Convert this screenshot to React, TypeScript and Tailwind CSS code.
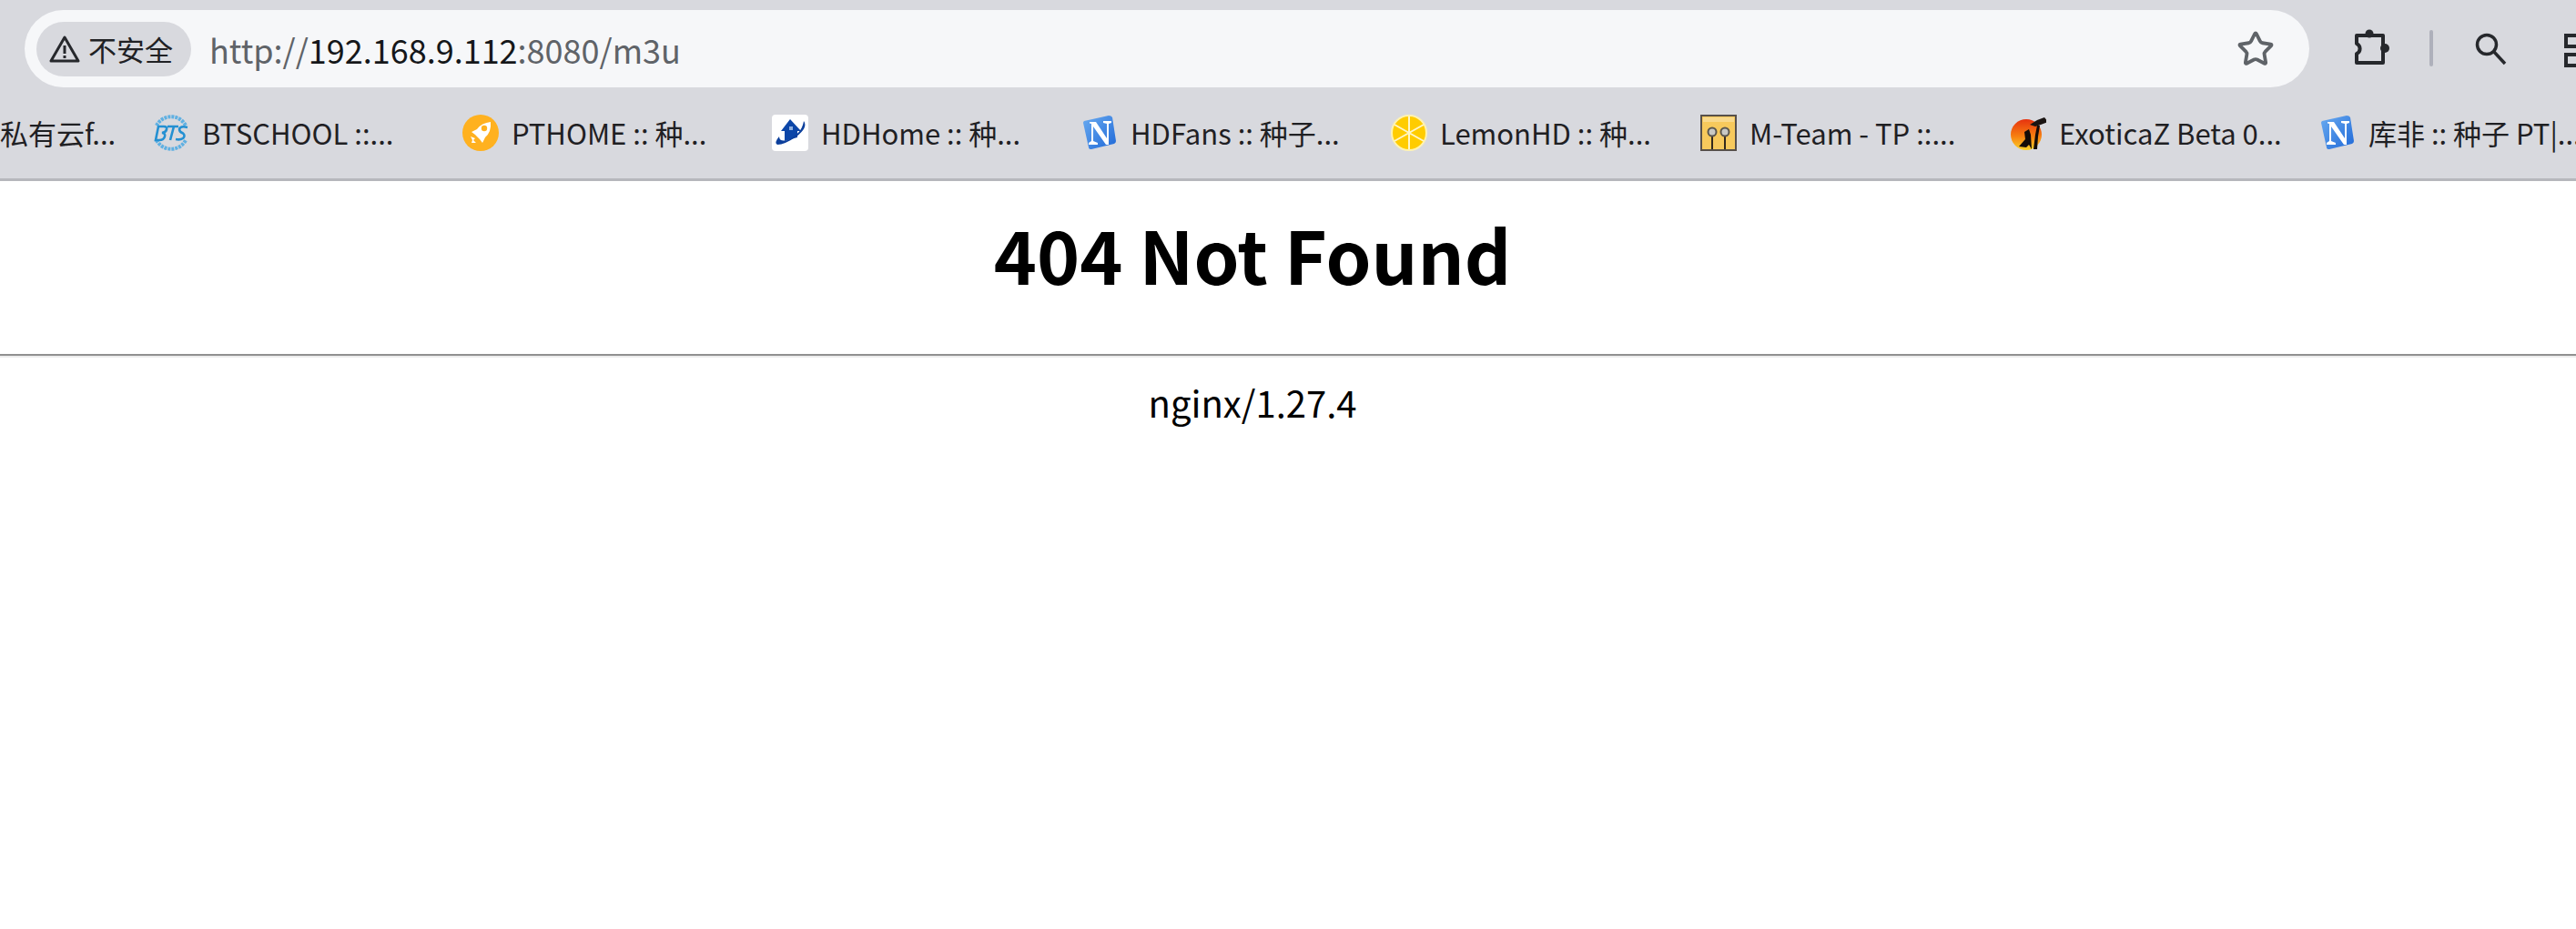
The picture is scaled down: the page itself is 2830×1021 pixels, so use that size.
import { ReactNode } from "react";
import { Star } from "lucide-react";

const cjk = "font-['Noto_Sans_CJK_SC','Noto_Sans',sans-serif]";

function BtsIcon() {
  return (
    <svg width="40" height="40" viewBox="0 0 40 40">
      <path d="M4 12A18 18 0 0 1 36 12" fill="none" stroke="#5fb0e2" strokeWidth="4" strokeDasharray="3 1" />
      <path d="M4 28A18 18 0 0 0 36 28" fill="none" stroke="#5fb0e2" strokeWidth="4" strokeDasharray="3 1" />
      <path d="M3 28L6 13H12Q16 13 15 16.5Q14 19.5 10 20Q14 20.5 13 24Q12 28 7 28Z" fill="none" stroke="#2490d2" strokeWidth="2.6" />
      <path d="M16 13H28M23 13L19 28" fill="none" stroke="#2490d2" strokeWidth="2.6" />
      <path d="M38 14Q30 12 29 16Q29 19 33 20.5Q36 23 33 26Q30 28 25 27" fill="none" stroke="#2490d2" strokeWidth="2.6" />
    </svg>
  );
}

function RocketIcon() {
  return (
    <svg width="40" height="40" viewBox="0 0 40 40">
      <circle cx="20" cy="20" r="20" fill="#ffb11f" />
      <path d="M31 8Q21 9 16 16L10 19L14 22L19 27L22 31L25 25Q32 19 31 8Z" fill="#fff" />
      <circle cx="24" cy="15" r="3.2" fill="#ffb11f" />
      <path d="M9 24L14 26L12 28L15 31L10 31L11 28Z" fill="#fff" />
    </svg>
  );
}

function HomeIcon() {
  return (
    <svg width="40" height="40" viewBox="0 0 40 40">
      <rect width="40" height="40" rx="4" fill="#fff" />
      <path d="M20 5L32 18H28V25L14 29V18H10Z" fill="#0c46a8" />
      <rect x="19" y="13" width="4" height="4" fill="#8fb0e0" />
      <path d="M35 7Q40 14 27 24Q14 33 6 33Q2 31 8 24Q8 30 17 28Q33 21 35 7Z" fill="#0c3f9c" />
    </svg>
  );
}

function NotionIcon() {
  return (
    <svg width="40" height="40" viewBox="0 0 40 40">
      <defs>
        <linearGradient id="ng" x1="0" y1="0" x2="1" y2="1">
          <stop offset="0" stopColor="#6aabf0" />
          <stop offset="1" stopColor="#1f69d8" />
        </linearGradient>
      </defs>
      <path d="M3 7L30 1Q33 1 34 3L38 29Q38 31 36 32L11 38Q8 38 8 36L2 9Q2 8 3 7Z" fill="url(#ng)" />
      <path d="M9 8H16L28 26V10L24 9V7H33V9L30 10V33H27L13 13V29L18 31V33H8V31L11 29V10L9 9.5Z" fill="#fff" />
    </svg>
  );
}

function LemonIcon() {
  return (
    <svg width="40" height="40" viewBox="0 0 40 40">
      <circle cx="20" cy="20" r="19" fill="#ffcc00" stroke="#fff3b0" strokeWidth="2" />
      <path d="M20 2V38M4 11L36 29M4 29L36 11" stroke="#fff6c8" strokeWidth="2" />
    </svg>
  );
}

function MTeamIcon() {
  return (
    <svg width="40" height="40" viewBox="0 0 40 40">
      <rect x="1" y="1" width="38" height="38" fill="#f7c95c" stroke="#57504a" strokeWidth="2" />
      <rect x="3" y="3" width="34" height="5" fill="#f9d98c" />
      <path d="M13 24V38M27 24V38" stroke="#33291c" strokeWidth="2" />
      <circle cx="13" cy="19" r="4.5" fill="#c9c9c4" stroke="#5b574e" strokeWidth="2" />
      <circle cx="27" cy="19" r="4.5" fill="#c9c9c4" stroke="#5b574e" strokeWidth="2" />
    </svg>
  );
}

function ExoticaIcon() {
  return (
    <svg width="40" height="40" viewBox="0 0 40 40">
      <defs>
        <linearGradient id="sun" x1="0" y1="0" x2="0" y2="1">
          <stop offset="0" stopColor="#e6320f" />
          <stop offset="0.55" stopColor="#f77f10" />
          <stop offset="1" stopColor="#fbd22a" />
        </linearGradient>
      </defs>
      <circle cx="18" cy="22" r="17" fill="url(#sun)" />
      <path d="M10 35L17 27L16 19L21 16L23 22L24 38L21 33L18 36Z" fill="#140c08" />
      <path d="M26 38L28 22L30 12L33 12L31 24L30 38Z" fill="#140c08" />
      <path d="M22 11L30 6L38 3L42 8L34 11L28 13Z" fill="#1a1412" />
    </svg>
  );
}

function PuzzleIcon() {
  return (
    <svg width="48" height="48" viewBox="0 0 48 48" fill="none" stroke="#26282c" strokeWidth="4" strokeLinejoin="round">
      <path d="M9 11H38V41H9V31A6 6 0 0 0 9 20Z" />
      <circle cx="23" cy="9" r="4.5" fill="#26282c" stroke="none" />
      <circle cx="40" cy="25" r="5" fill="#26282c" stroke="none" />
    </svg>
  );
}

function SearchIcon() {
  return (
    <svg width="40" height="40" viewBox="0 0 40 40" fill="none" stroke="#26282c" strokeWidth="3.5">
      <circle cx="15" cy="16" r="10.5" />
      <path d="M22.5 23.5L35 37" />
    </svg>
  );
}

function Bookmark({ icon, label }: { icon: ReactNode; label: string }) {
  return (
    <div className="flex w-[340px] shrink-0 items-center gap-[14px]">
      {icon}
      <span className="whitespace-nowrap text-[31px] leading-[40px] text-[#1f2023]">{label}</span>
    </div>
  );
}

export default function App() {
  return (
    <div className={`flex h-screen flex-col overflow-hidden bg-white ${cjk}`}>
      <header className="h-[199px] shrink-0 border-b-[3px] border-[#b6b7bc] bg-[#d8d9de]">
        <div className="flex h-[126px] pt-[11px]">
          <div className="ml-[27px] flex h-[85px] w-[2510px] shrink-0 items-center rounded-full bg-[#f6f7f9] pl-[13px] pr-[38px]">
            <div className="flex h-[60px] w-[170px] shrink-0 items-center gap-[8px] rounded-full bg-[#d8d9de] pl-[13px]">
              <svg width="36" height="36" viewBox="0 0 36 36" fill="none" stroke="#26282c" strokeWidth="3" strokeLinejoin="round">
                <path d="M18 5L33 31H3Z" />
                <path d="M18 14V23M18 25V28" />
              </svg>
              <span className="whitespace-nowrap text-[31px] leading-none text-[#202124]">不安全</span>
            </div>
            <div className="ml-[20px] whitespace-nowrap text-[36px] leading-none text-[#5f6368]">
              http://<span className="text-[#15171a]">192.168.9.112</span>:8080/m3u
            </div>
            <Star size={42} strokeWidth={2.2} className="ml-auto text-[#5f6368]" />
          </div>
          <div className="ml-[43px] mt-[17px] shrink-0">
            <PuzzleIcon />
          </div>
          <div className="ml-[41px] mt-[22px] h-[40px] w-[4px] shrink-0 rounded-full bg-[#aeb0bb]" />
          <div className="ml-[44px] mt-[22px] shrink-0">
            <SearchIcon />
          </div>
          <div className="ml-[60px] mt-[26px] flex shrink-0 flex-col gap-[5px] self-start">
            <div className="h-[16px] w-[24px] border-[4px] border-[#26282c]" />
            <div className="h-[16px] w-[24px] border-[4px] border-[#26282c]" />
          </div>
        </div>
        <div className="flex items-center pl-[168px]">
          <span className="-ml-[168px] w-[168px] shrink-0 whitespace-nowrap text-[31px] leading-[40px] text-[#1f2023]">私有云f...</span>
          <Bookmark icon={<BtsIcon />} label="BTSCHOOL ::..." />
          <Bookmark icon={<RocketIcon />} label="PTHOME :: 种..." />
          <Bookmark icon={<HomeIcon />} label="HDHome :: 种..." />
          <Bookmark icon={<NotionIcon />} label="HDFans :: 种子..." />
          <Bookmark icon={<LemonIcon />} label="LemonHD :: 种..." />
          <Bookmark icon={<MTeamIcon />} label="M-Team - TP ::..." />
          <Bookmark icon={<ExoticaIcon />} label="ExoticaZ Beta 0..." />
          <Bookmark icon={<NotionIcon />} label="库非 :: 种子 PT|..." />
        </div>
      </header>
      <main className="text-black">
        <h1 className="flex h-[190px] w-[2752px] items-start justify-center pt-[29px] text-[80px] font-bold leading-[100px]">404 Not Found</h1>
        <div className="h-[4px] border-t-[2px] border-[#909090] bg-[#ececec]" />
        <p className="w-[2752px] pt-[24px] text-center text-[40px] leading-[50px]">nginx/1.27.4</p>
      </main>
    </div>
  );
}
